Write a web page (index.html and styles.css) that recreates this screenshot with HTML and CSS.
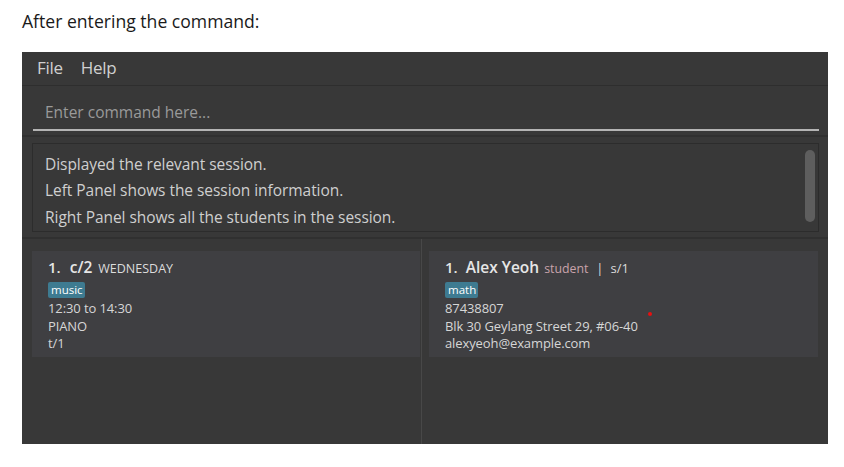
FILE: index.html
```html
<!DOCTYPE html>
<html>
<head>
<meta charset="utf-8">
<link rel="stylesheet" href="styles.css">
</head>
<body>
<p class="intro">After entering the command:</p>
<div class="window">
  <div class="menubar">
    <span class="menu-item">File</span>
    <span class="menu-item">Help</span>
  </div>
  <div class="command">
    <div class="command-field">Enter command here...</div>
  </div>
  <div class="result">
    <div class="result-box">
      <div class="result-text">
        <div>Displayed the relevant session.</div>
        <div>Left Panel shows the session information.</div>
        <div>Right Panel shows all the students in the session.</div>
      </div>
      <div class="scrollbar"></div>
    </div>
  </div>
  <div class="panels">
    <div class="panel panel-left">
      <div class="card">
        <div class="card-title"><span class="idx">1.</span><span class="name">c/2</span><span class="day">WEDNESDAY</span></div>
        <div class="tags"><span class="tag">music</span></div>
        <div class="line">12:30 to 14:30</div>
        <div class="line">PIANO</div>
        <div class="line">t/1</div>
      </div>
    </div>
    <div class="panel panel-right">
      <div class="card">
        <div class="card-title"><span class="idx">1.</span><span class="name">Alex Yeoh</span><span class="role">student</span><span class="sep">|</span><span class="sid">s/1</span></div>
        <div class="tags"><span class="tag">math</span></div>
        <div class="line">87438807</div>
        <div class="line">Blk 30 Geylang Street 29, #06-40</div>
        <div class="line">alexyeoh@example.com</div>
        <span class="dot"></span>
      </div>
    </div>
  </div>
</div>
</body>
</html>
```

FILE: styles.css
```css
* { box-sizing: border-box; }
body {
  margin: 0;
  background: #ffffff;
  font-family: "Open Sans", "Noto Sans", sans-serif;
}
.intro {
  margin: 0;
  padding: 9px 0 0 22px;
  height: 52px;
  font-size: 17.6px;
  line-height: 24px;
  color: #1a1a1a;
}
.window {
  margin-left: 22px;
  width: 806px;
  height: 392px;
  background: #383838;
  display: flex;
  flex-direction: column;
}
.menubar {
  height: 34px;
  border-bottom: 1px solid #2e2e2e;
  display: flex;
  align-items: center;
  padding-left: 15px;
  gap: 18px;
  padding-bottom: 3px;
}
.menu-item {
  font-size: 17px;
  color: #d0d0d0;
  letter-spacing: -0.3px;
}
.command {
  height: 51px;
  padding: 0 9px 0 11px;
  border-bottom: 2px solid #303030;
}
.command-field {
  height: 45px;
  border-bottom: 2px solid #b4b4b4;
  padding: 15px 0 0 12px;
  font-size: 15.5px;
  color: #9a9a9a;
}
.result {
  height: 102px;
  padding: 6px 9px 7px 10px;
  border-bottom: 2px solid #303030;
}
.result-box {
  height: 89px;
  border: 1px solid #2c2c2c;
  display: flex;
  justify-content: space-between;
  padding: 6px 3px 8px 12px;
}
.result-text {
  font-size: 15.5px;
  line-height: 26.5px;
  color: #cfcfcf;
  letter-spacing: -0.05px;
  margin-top: 0.5px;
}
.scrollbar {
  width: 10px;
  height: 72px;
  border-radius: 5px;
  background: #5e5e5e;
}
.panels {
  flex: 1;
  display: grid;
  grid-template-columns: 400px 406px;
}
.panel {
  padding-top: 12px;
}
.panel-left {
  padding-left: 10px;
  padding-right: 1px;
  border-right: 1px solid #484848;
}
.panel-right {
  padding-left: 7px;
  padding-right: 10px;
}
.card {
  position: relative;
  height: 106px;
  background: #3f3f42;
  padding: 7px 15px 7px 16px;
  color: #d6d6d6;
  font-size: 13px;
  line-height: 18px;
}
.card-title {
  display: flex;
  align-items: baseline;
  height: 20px;
  margin-bottom: 1px;
}
.idx {
  font-size: 15px;
  font-weight: 600;
  color: #e6e6e6;
  margin-right: 8px;
}
.name {
  font-size: 15.5px;
  font-weight: 600;
  color: #e6e6e6;
  margin-right: 5px;
}
.panel-left .idx { margin-right: 9px; }
.panel-left .name { margin-right: 6px; }
.day {
  font-size: 12.5px;
  color: #dcdcdc;
}
.role {
  font-size: 12.3px;
  color: #c9a3ab;
  margin-right: 8px;
}
.sep {
  font-size: 13px;
  color: #dcdcdc;
  margin-right: 7px;
}
.sid {
  font-size: 13px;
  color: #dcdcdc;
}
.tags {
  height: 20px;
  display: flex;
  align-items: center;
  padding-top: 1px;
}
.tag {
  background: #3e7b91;
  color: #ffffff;
  font-size: 11.5px;
  line-height: 16px;
  padding: 0 2px 0 3px;
  border-radius: 2px;
}
.line {
  height: 17.5px;
  letter-spacing: -0.1px;
}
.dot {
  position: absolute;
  left: 219px;
  top: 61px;
  width: 4px;
  height: 4px;
  border-radius: 50%;
  background: #e81010;
}
```
